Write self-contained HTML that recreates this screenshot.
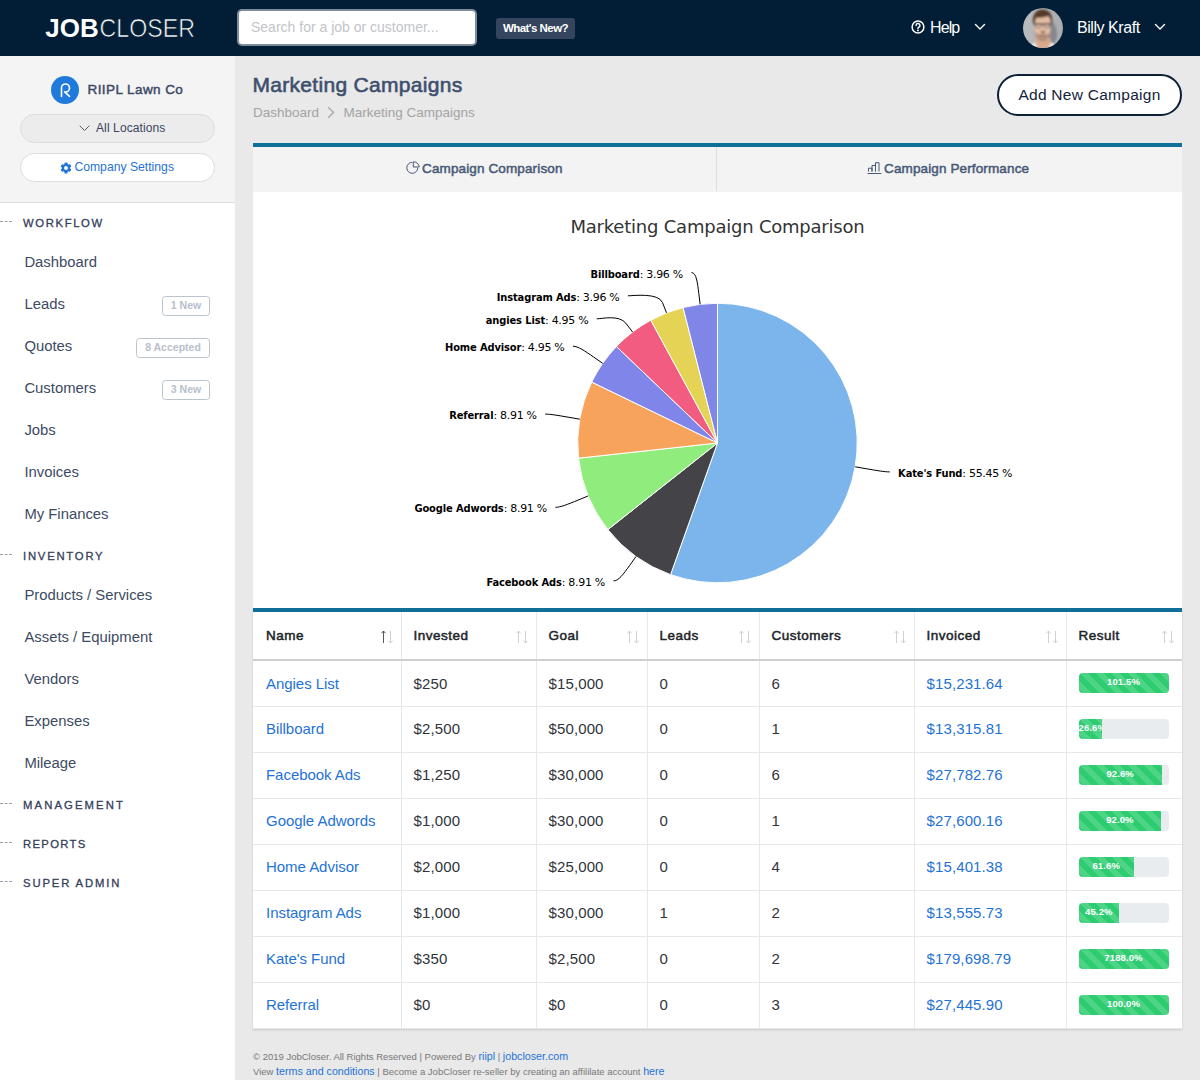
<!DOCTYPE html>
<html lang="en">
<head>
<meta charset="utf-8">
<title>Marketing Campaigns - JobCloser</title>
<style>
*{box-sizing:border-box;}
html,body{margin:0;padding:0;}
body{width:1200px;height:1080px;overflow:hidden;background:#e9e9e9;font-family:"Liberation Sans",sans-serif;color:#2f3b52;position:relative;}
a{color:#1f72d6;text-decoration:none;}
.abs{position:absolute;white-space:nowrap;}
/* header */
#hdr{position:absolute;left:0;top:0;width:1200px;height:56px;background:#021e36;}
#logo{position:absolute;left:46px;top:12px;font-size:26px;line-height:30px;color:#fff;white-space:nowrap;}
#logo b{font-weight:700;}
#logo span{font-weight:400;}
#search{position:absolute;left:237px;top:9px;width:240px;height:37px;background:#fff;border:2px solid #7e8b99;border-radius:5px;font-size:14px;line-height:33.500px;color:#c2c4ca;padding-left:12px;white-space:nowrap;}
#whatsnew{position:absolute;left:496px;top:18px;width:79px;height:21px;background:#34455d;border-radius:3px;color:#fff;font-size:11.5px;letter-spacing:-.55px;font-weight:700;line-height:20px;text-align:center;white-space:nowrap;}
#help{position:absolute;left:930px;top:17.500px;color:#fff;font-size:16px;letter-spacing:-.9px;line-height:20px;white-space:nowrap;}
#user{position:absolute;left:1077px;top:17.500px;color:#fff;font-size:16px;letter-spacing:-.45px;line-height:20px;white-space:nowrap;}
#avatar{position:absolute;left:1023px;top:7.800px;width:40px;height:40.200px;}
/* sidebar */
#side{position:absolute;left:0;top:56px;width:235px;height:1024px;background:#fff;}
#sidetop{position:absolute;left:0;top:0;width:235px;height:147px;background:#f4f4f4;border-bottom:1px solid #dcdcdc;}
#co{position:absolute;left:87.500px;top:24.700px;font-size:13.500px;font-weight:400;-webkit-text-stroke:.45px #3a4866;letter-spacing:.42px;color:#3a4866;line-height:18px;white-space:nowrap;}
#cocirc{position:absolute;left:50.900px;top:19.900px;width:28.200px;height:28.200px;border-radius:50%;background:#1f7adb;}
.pill{position:absolute;left:20px;width:195px;height:29px;border-radius:15px;border:1px solid #dddddd;font-size:12px;line-height:27px;white-space:nowrap;}
.sec{position:absolute;left:23px;font-size:11.300px;font-weight:400;-webkit-text-stroke:.3px #34405a;letter-spacing:0;color:#34405a;line-height:14px;margin-top:1px;white-space:nowrap;}
.dash{position:absolute;left:0;width:12px;height:0;border-top:1px dashed #9aa0ab;}
.nav{position:absolute;left:24.400px;font-size:14.850px;color:#3d4a63;line-height:18px;white-space:nowrap;}
.badge{position:absolute;height:20px;border:1px solid #bbc3cc;border-radius:3.500px;color:#b7c0cc;font-size:10.500px;font-weight:700;line-height:17.400px;text-align:center;white-space:nowrap;background:#fff;}
/* main */
#title{position:absolute;left:252.500px;top:71.500px;font-size:21px;line-height:26px;color:#3e4f6e;font-weight:400;-webkit-text-stroke:.6px #3e4f6e;letter-spacing:.3px;white-space:nowrap;}
#crumb{position:absolute;left:253px;top:104px;font-size:13.5px;line-height:18px;color:#a3a3a3;white-space:nowrap;}
#addbtn{position:absolute;left:997px;top:73.600px;width:185px;height:42.200px;border:2px solid #0b2036;border-radius:22px;background:#fff;color:#14233b;font-size:15.500px;letter-spacing:.27px;line-height:38px;text-align:center;white-space:nowrap;}
#tabs{position:absolute;left:253px;top:143px;width:929px;height:48.500px;background:#f3f3f3;border-top:4px solid #0e6f97;}
.tab{position:absolute;top:0;height:44px;font-size:13.5px;font-weight:400;-webkit-text-stroke:.5px #475977;letter-spacing:.13px;color:#475977;line-height:43px;white-space:nowrap;}
#tabdiv{position:absolute;left:463px;top:0;width:1px;height:44px;background:#dededf;}
#chart{position:absolute;left:253px;top:191.500px;width:929px;height:416.500px;background:#fff;}
#chart svg{position:absolute;left:0;top:-1.500px;}
.dl{font-family:"DejaVu Sans","Liberation Sans",sans-serif;font-size:11px;fill:#000;letter-spacing:-.3px;}
.dlb{letter-spacing:-.12px;font-weight:700;font-family:"DejaVu Sans Condensed","DejaVu Sans",sans-serif;}
.ct{font-family:"DejaVu Sans","Liberation Sans",sans-serif;font-size:18px;fill:#333;letter-spacing:-.22px;}
#tbl{position:absolute;left:253px;top:608px;width:929px;height:421px;background:#fff;border-top:4px solid #0e6f97;box-shadow:0 1px 2px rgba(0,0,0,.15);}
table{border-collapse:collapse;table-layout:fixed;width:929px;}
th,td{padding:0 0 0 12px;text-align:left;border-left:1px solid #e6e8eb;white-space:nowrap;overflow:hidden;position:relative;}
th:first-child,td:first-child{border-left:none;padding-left:13px;}
th{height:48px;font-size:13.5px;font-weight:400;-webkit-text-stroke:.5px #212529;letter-spacing:.5px;color:#212529;border-bottom:2px solid #cfcfcf;}
td{height:46px;font-size:15px;color:#30343a;border-bottom:1px solid #e6e8eb;padding-bottom:.500px;letter-spacing:.12px;}
td:last-child{padding-bottom:0;}
td:first-child{letter-spacing:-.04px;}
.srt{position:absolute;right:5px;top:18px;}
.pg{width:90px;height:20px;border-radius:4px;background:#e9ecef;overflow:hidden;position:relative;}
.pb{height:20px;background-color:#2ecc71;background-image:linear-gradient(45deg,rgba(255,255,255,.15) 25%,transparent 25%,transparent 50%,rgba(255,255,255,.15) 50%,rgba(255,255,255,.15) 75%,transparent 75%,transparent);background-size:16px 16px;color:#fff;font-size:9.5px;font-weight:700;line-height:17px;text-align:center;white-space:nowrap;overflow:hidden;}
#foot{position:absolute;left:253px;top:1049px;font-size:9.5px;line-height:15px;color:#777;white-space:nowrap;}
#foot a{font-size:10.7px;}
</style>
</head>
<body>
<div id="hdr">
  <svg class="abs" style="left:40px;top:8px" width="170" height="40" viewBox="0 0 170 40"><text x="5.3" y="28.600" font-family="Liberation Sans, sans-serif" font-size="26.300" font-weight="700" fill="#fff" textLength="53.4" lengthAdjust="spacingAndGlyphs">JOB</text><text x="59.6" y="28.600" font-family="Liberation Sans, sans-serif" font-size="26.300" fill="#fff" stroke="#021e36" stroke-width="0.7" textLength="95.4" lengthAdjust="spacingAndGlyphs">CLOSER</text></svg>
  <div id="search">Search for a job or customer...</div>
  <div id="whatsnew">What's New?</div>
  <svg class="abs" style="left:911px;top:20px" width="14" height="14" viewBox="0 0 14 14"><circle cx="7" cy="7" r="5.900" fill="none" stroke="#fff" stroke-width="1.500"/><path d="M5.100 5.500a1.900 1.900 0 1 1 2.700 1.700c-.5.300-.8.600-.8 1.300" fill="none" stroke="#fff" stroke-width="1.500" stroke-linecap="round"/><circle cx="7" cy="10.400" r=".95" fill="#fff"/></svg>
  <div id="help">Help</div>
  <svg class="abs" style="left:974px;top:23px" width="12" height="8" viewBox="0 0 12 8"><path d="M1.5 1.5L6 6l4.5-4.5" fill="none" stroke="#fff" stroke-width="1.4" stroke-linecap="round" stroke-linejoin="round"/></svg>
  <svg id="avatar" viewBox="0 0 40 40"><defs><clipPath id="avc"><circle cx="20" cy="20" r="20"/></clipPath><filter id="avb" x="-10%" y="-10%" width="120%" height="120%"><feGaussianBlur stdDeviation="1"/></filter><linearGradient id="avg" x1="0" x2="1" y1="0" y2="0"><stop offset="0" stop-color="#b9bbbf"/><stop offset=".6" stop-color="#b0b2b6"/><stop offset="1" stop-color="#a9abaf"/></linearGradient></defs><g clip-path="url(#avc)"><rect width="40" height="40" fill="url(#avg)"/><g filter="url(#avb)"><path d="M27 12c4 2 7 8 7 14s-2 9-6 11l-3-2z" fill="#85878d"/><path d="M8 40c0-4 3-5.500 6-6h12c3 .5 6 2 6 6z" fill="#f4f4f4"/><path d="M12.500 30h15v7c-2 3-5 4-7.500 4s-5.500-1-7.500-4z" fill="#d9a98e"/><path d="M11.500 13c0-6 3.500-8 8-8s8 2 8 8v8c0 7-4 12-8 12s-8-5-8-12z" fill="#e3bca4"/><path d="M11.600 23c1 2 3 3.500 4 3.600c2.500-1 5.500-1 8 0c1-.1 3-1.600 4-3.600c0 6-4 10.500-8 10.500s-8-4.500-8-10.500z" fill="#b3917b"/><path d="M15.500 26.200c2.500 1.200 5.500 1.200 8 0c-1.500 2-6.500 2-8 0z" fill="#7a4a48"/><path d="M10 15c-1-8 3-13.500 9.500-13.500c6 0 10.500 4 9.800 13.500l-1.300 1.500c0-4-1-7-3-8.500c-3 1.500-8 2-11.500 1.500c-1.200 1.500-1.500 4-1.500 7z" fill="#553a2a"/><path d="M10.600 15.200h17.800v1.300h-17.800z" fill="#4a4044"/><ellipse cx="20" cy="24" rx="2.200" ry="1" fill="#5a3a3a"/><rect x="12.300" y="15.600" width="6" height="3.800" rx="1" fill="none" stroke="#5a5054" stroke-width=".8"/><rect x="21" y="15.600" width="6" height="3.800" rx="1" fill="none" stroke="#5a5054" stroke-width=".8"/></g></g></svg>
  <div id="user">Billy Kraft</div>
  <svg class="abs" style="left:1154px;top:23px" width="12" height="8" viewBox="0 0 12 8"><path d="M1.5 1.5L6 6l4.5-4.5" fill="none" stroke="#fff" stroke-width="1.4" stroke-linecap="round" stroke-linejoin="round"/></svg>
</div>
<div id="side">
  <div id="sidetop">
    <div id="cocirc"></div>
    <svg class="abs" style="left:57px;top:26px" width="16" height="16" viewBox="0 0 16 16"><path d="M4.500 6V14.500M4.500 6A4 4 0 1 1 8.500 10M7.600 9.900L12.500 14.300" fill="none" stroke="#fff" stroke-width="1.600" stroke-linecap="round" stroke-linejoin="round"/></svg>
    <div id="co">RIIPL Lawn Co</div>
    <div class="pill" style="top:58px;background:#ececec;color:#3a4560;"><svg class="abs" style="left:58px;top:10px" width="11" height="7" viewBox="0 0 11 7"><path d="M1 1l4.5 4.5L10 1" fill="none" stroke="#4a5066" stroke-width=".95" stroke-linecap="round" stroke-linejoin="round"/></svg><span class="abs" style="left:75px;top:0;letter-spacing:.11px">All Locations</span></div>
    <div class="pill" style="top:97px;background:#fff;color:#1f72d6;"><svg class="abs" style="left:39px;top:8px" width="12" height="12" viewBox="0 0 24 24"><path fill="#1f72d6" d="M22.2 14.4l-2-1.2a8.300 8.300 0 0 0 0-2.500l2-1.200a.6.600 0 0 0 .3-.7 11.600 11.600 0 0 0-2.500-4.400.6.600 0 0 0-.7-.1l-2 1.200a8.100 8.100 0 0 0-2.200-1.300V1.900a.6.600 0 0 0-.5-.6 11.700 11.700 0 0 0-5.100 0 .6.600 0 0 0-.5.600v2.400a8.100 8.100 0 0 0-2.200 1.300l-2-1.200a.6.600 0 0 0-.7.100A11.600 11.600 0 0 0 1.500 8.900a.6.600 0 0 0 .3.700l2 1.200a8.300 8.300 0 0 0 0 2.500l-2 1.200a.6.600 0 0 0-.3.700 11.600 11.600 0 0 0 2.500 4.400.6.600 0 0 0 .7.100l2-1.200a8.100 8.100 0 0 0 2.200 1.300v2.400a.6.600 0 0 0 .5.600 11.700 11.700 0 0 0 5.100 0 .6.600 0 0 0 .5-.6v-2.400a8.100 8.100 0 0 0 2.200-1.300l2 1.200a.6.600 0 0 0 .7-.1 11.600 11.600 0 0 0 2.500-4.400.6.600 0 0 0-.3-.8zM12 15.900a3.900 3.900 0 1 1 0-7.800 3.900 3.900 0 0 1 0 7.800z"/></svg><span class="abs" style="left:53.400px;top:0;font-size:12.200px">Company Settings</span></div>
  </div>
  <div class="dash" style="top:165px"></div><div class="sec" style="top:159px;letter-spacing:1.63px">WORKFLOW</div>
  <div class="nav" style="top:197px">Dashboard</div>
  <div class="nav" style="top:239px">Leads</div>
  <div class="badge" style="left:162px;top:240px;width:48px">1 New</div>
  <div class="nav" style="top:281px">Quotes</div>
  <div class="badge" style="left:136px;top:282px;width:74px">8 Accepted</div>
  <div class="nav" style="top:323px">Customers</div>
  <div class="badge" style="left:162px;top:324px;width:48px">3 New</div>
  <div class="nav" style="top:365px">Jobs</div>
  <div class="nav" style="top:407px">Invoices</div>
  <div class="nav" style="top:449px">My Finances</div>
  <div class="dash" style="top:498px"></div><div class="sec" style="top:492px;letter-spacing:1.77px">INVENTORY</div>
  <div class="nav" style="top:530px">Products / Services</div>
  <div class="nav" style="top:572px">Assets / Equipment</div>
  <div class="nav" style="top:614px">Vendors</div>
  <div class="nav" style="top:656px">Expenses</div>
  <div class="nav" style="top:698px">Mileage</div>
  <div class="dash" style="top:747px"></div><div class="sec" style="top:741px;letter-spacing:2.1px">MANAGEMENT</div>
  <div class="dash" style="top:786px"></div><div class="sec" style="top:780px;letter-spacing:1.33px">REPORTS</div>
  <div class="dash" style="top:825px"></div><div class="sec" style="top:819px;letter-spacing:1.86px">SUPER ADMIN</div>
</div>
<div id="title">Marketing Campaigns</div>
<div id="crumb">Dashboard<span style="display:inline-block;width:24.500px"></span>Marketing Campaigns</div>
<svg class="abs" style="left:327px;top:106px" width="8" height="13" viewBox="0 0 8 13"><path d="M1.5 1.5l5 5-5 5" fill="none" stroke="#a3a3a3" stroke-width="1.1" stroke-linecap="round" stroke-linejoin="round"/></svg>
<div id="addbtn">Add New Campaign</div>
<div id="tabs">
  <svg class="abs" style="left:153px;top:13.500px" width="15" height="14" viewBox="0 0 15 14"><path d="M6.300 1.300A5.500 5.500 0 1 0 11.800 6.800M7.300 .8V6H13.200A5.700 5.700 0 0 0 7.300 .8Z" fill="none" stroke="#475977" stroke-width="1"/></svg>
  <div class="tab" style="left:169px">Campaign Comparison</div>
  <div id="tabdiv"></div>
  <svg class="abs" style="left:614px;top:14px" width="16" height="14" viewBox="0 0 16 14"><path d="M1.500 10.500V7.200H5V10.500M5 10.500V4.500H8.500V10.500M8.500 10.500V1.700H12V10.500M.5 12.500H14.300" fill="none" stroke="#475977" stroke-width="1"/></svg>
  <div class="tab" style="left:631px">Campaign Performance</div>
</div>
<div id="chart">
<svg width="929" height="418" viewBox="0 0 929 418">
<text x="464.5" y="43" text-anchor="middle" class="ct">Marketing Campaign Comparison</text>
<path d="M464.50 253.00L464.50 113.25A139.75 139.75 0 1 1 417.57 384.64Z" fill="#7cb5ec" stroke="#fff" stroke-width="1" stroke-linejoin="round"/>
<path d="M636.77 281.92C631.77 281.92 623.88 280.56 613.05 278.69L602.21 276.81" fill="none" stroke="#000" stroke-width="1"/>
<path d="M464.50 253.00L417.57 384.64A139.75 139.75 0 0 1 354.83 339.62Z" fill="#434348" stroke="#fff" stroke-width="1" stroke-linejoin="round"/>
<path d="M360.54 390.92C365.54 390.92 370.21 384.42 376.62 375.49L383.03 366.55" fill="none" stroke="#000" stroke-width="1"/>
<path d="M464.50 253.00L354.83 339.62A139.75 139.75 0 0 1 325.57 268.16Z" fill="#90ed7d" stroke="#fff" stroke-width="1" stroke-linejoin="round"/>
<path d="M302.41 317.32C307.41 317.32 314.81 314.29 324.99 310.12L335.17 305.95" fill="none" stroke="#000" stroke-width="1"/>
<path d="M464.50 253.00L325.57 268.16A139.75 139.75 0 0 1 338.73 192.07Z" fill="#f7a35c" stroke="#fff" stroke-width="1" stroke-linejoin="round"/>
<path d="M292.23 224.08C297.23 224.08 305.12 225.44 315.95 227.31L326.79 229.19" fill="none" stroke="#000" stroke-width="1"/>
<path d="M464.50 253.00L338.73 192.07A139.75 139.75 0 0 1 363.41 156.51Z" fill="#8085e9" stroke="#fff" stroke-width="1" stroke-linejoin="round"/>
<path d="M320.04 156.22C325.04 156.22 331.61 160.78 340.65 167.06L349.69 173.33" fill="none" stroke="#000" stroke-width="1"/>
<path d="M464.50 253.00L363.41 156.51A139.75 139.75 0 0 1 397.79 130.20Z" fill="#f15c80" stroke="#fff" stroke-width="1" stroke-linejoin="round"/>
<path d="M343.79 128.80C348.79 128.80 366.21 124.54 372.89 133.28L379.58 142.01" fill="none" stroke="#000" stroke-width="1"/>
<path d="M464.50 253.00L397.79 130.20A139.75 139.75 0 0 1 430.09 117.55Z" fill="#e4d354" stroke="#fff" stroke-width="1" stroke-linejoin="round"/>
<path d="M374.96 105.80C379.96 105.80 405.52 102.39 409.53 112.63L413.54 122.87" fill="none" stroke="#000" stroke-width="1"/>
<path d="M464.50 253.00L430.09 117.55A139.75 139.75 0 0 1 464.50 113.25Z" fill="#8085e8" stroke="#fff" stroke-width="1" stroke-linejoin="round"/>
<path d="M438.44 82.60C443.44 82.60 444.43 92.50 445.79 103.42L447.16 114.33" fill="none" stroke="#000" stroke-width="1"/>
<text x="645.1" y="286.9" text-anchor="start" class="dl"><tspan class="dlb">Kate's Fund</tspan>: 55.45 %</text>
<text x="352.0" y="395.9" text-anchor="end" class="dl"><tspan class="dlb">Facebook Ads</tspan>: 8.91 %</text>
<text x="293.9" y="322.3" text-anchor="end" class="dl"><tspan class="dlb">Google Adwords</tspan>: 8.91 %</text>
<text x="283.7" y="229.1" text-anchor="end" class="dl"><tspan class="dlb">Referral</tspan>: 8.91 %</text>
<text x="311.5" y="161.2" text-anchor="end" class="dl"><tspan class="dlb">Home Advisor</tspan>: 4.95 %</text>
<text x="335.3" y="133.8" text-anchor="end" class="dl"><tspan class="dlb">angies List</tspan>: 4.95 %</text>
<text x="366.5" y="110.8" text-anchor="end" class="dl"><tspan class="dlb">Instagram Ads</tspan>: 3.96 %</text>
<text x="429.9" y="87.6" text-anchor="end" class="dl"><tspan class="dlb">Billboard</tspan>: 3.96 %</text>
</svg>
</div>
<div id="tbl">
<table>
<colgroup><col style="width:148px"><col style="width:135px"><col style="width:111px"><col style="width:112px"><col style="width:155px"><col style="width:152px"><col style="width:116px"></colgroup>
<thead><tr>
<th>Name<svg class="srt" width="16" height="14" viewBox="0 0 16 14"><path d="M3.500 1V13M1.500 3.300L3.500 1L5.500 3.300" fill="none" stroke="#444" stroke-width=".9"/><path d="M10.500 1V13M8.500 10.700L10.500 13L12.500 10.700" fill="none" stroke="#d0d0d0" stroke-width="1"/></svg></th>
<th>Invested<svg class="srt" width="16" height="14" viewBox="0 0 16 14"><path d="M3.500 1V13M1.500 3.300L3.500 1L5.500 3.300M10.500 1V13M8.500 10.700L10.500 13L12.500 10.700" fill="none" stroke="#d0d0d0" stroke-width="1"/></svg></th>
<th>Goal<svg class="srt" width="16" height="14" viewBox="0 0 16 14"><path d="M3.500 1V13M1.500 3.300L3.500 1L5.500 3.300M10.500 1V13M8.500 10.700L10.500 13L12.500 10.700" fill="none" stroke="#d0d0d0" stroke-width="1"/></svg></th>
<th>Leads<svg class="srt" width="16" height="14" viewBox="0 0 16 14"><path d="M3.500 1V13M1.500 3.300L3.500 1L5.500 3.300M10.500 1V13M8.500 10.700L10.500 13L12.500 10.700" fill="none" stroke="#d0d0d0" stroke-width="1"/></svg></th>
<th>Customers<svg class="srt" width="16" height="14" viewBox="0 0 16 14"><path d="M3.500 1V13M1.500 3.300L3.500 1L5.500 3.300M10.500 1V13M8.500 10.700L10.500 13L12.500 10.700" fill="none" stroke="#d0d0d0" stroke-width="1"/></svg></th>
<th>Invoiced<svg class="srt" width="16" height="14" viewBox="0 0 16 14"><path d="M3.500 1V13M1.500 3.300L3.500 1L5.500 3.300M10.500 1V13M8.500 10.700L10.500 13L12.500 10.700" fill="none" stroke="#d0d0d0" stroke-width="1"/></svg></th>
<th>Result<svg class="srt" width="16" height="14" viewBox="0 0 16 14"><path d="M3.500 1V13M1.500 3.300L3.500 1L5.500 3.300M10.500 1V13M8.500 10.700L10.500 13L12.500 10.700" fill="none" stroke="#d0d0d0" stroke-width="1"/></svg></th>
</tr></thead>
<tbody>
<tr><td><a>Angies List</a></td><td>$250</td><td>$15,000</td><td>0</td><td>6</td><td><a>$15,231.64</a></td><td><div class="pg"><div class="pb" style="width:100%">101.5%</div></div></td></tr>
<tr><td><a>Billboard</a></td><td>$2,500</td><td>$50,000</td><td>0</td><td>1</td><td><a>$13,315.81</a></td><td><div class="pg"><div class="pb" style="width:26.6%">26.6%</div></div></td></tr>
<tr><td><a>Facebook Ads</a></td><td>$1,250</td><td>$30,000</td><td>0</td><td>6</td><td><a>$27,782.76</a></td><td><div class="pg"><div class="pb" style="width:92.6%">92.6%</div></div></td></tr>
<tr><td><a>Google Adwords</a></td><td>$1,000</td><td>$30,000</td><td>0</td><td>1</td><td><a>$27,600.16</a></td><td><div class="pg"><div class="pb" style="width:92.0%">92.0%</div></div></td></tr>
<tr><td><a>Home Advisor</a></td><td>$2,000</td><td>$25,000</td><td>0</td><td>4</td><td><a>$15,401.38</a></td><td><div class="pg"><div class="pb" style="width:61.6%">61.6%</div></div></td></tr>
<tr><td><a>Instagram Ads</a></td><td>$1,000</td><td>$30,000</td><td>1</td><td>2</td><td><a>$13,555.73</a></td><td><div class="pg"><div class="pb" style="width:45.2%">45.2%</div></div></td></tr>
<tr><td><a>Kate's Fund</a></td><td>$350</td><td>$2,500</td><td>0</td><td>2</td><td><a>$179,698.79</a></td><td><div class="pg"><div class="pb" style="width:100%">7188.0%</div></div></td></tr>
<tr><td><a>Referral</a></td><td>$0</td><td>$0</td><td>0</td><td>3</td><td><a>$27,445.90</a></td><td><div class="pg"><div class="pb" style="width:100%">100.0%</div></div></td></tr>
</tbody>
</table>
</div>
<div id="foot"><span id="f1">&copy; 2019 JobCloser. All Rights Reserved | Powered By</span> <a id="f2">riipl</a> | <a id="f3">jobcloser.com</a><br><span id="f4">View</span> <a id="f5">terms and conditions</a> | <span id="f6">Become a JobCloser re-seller by creating an affililate account</span> <a id="f7">here</a></div>
</body>
</html>
